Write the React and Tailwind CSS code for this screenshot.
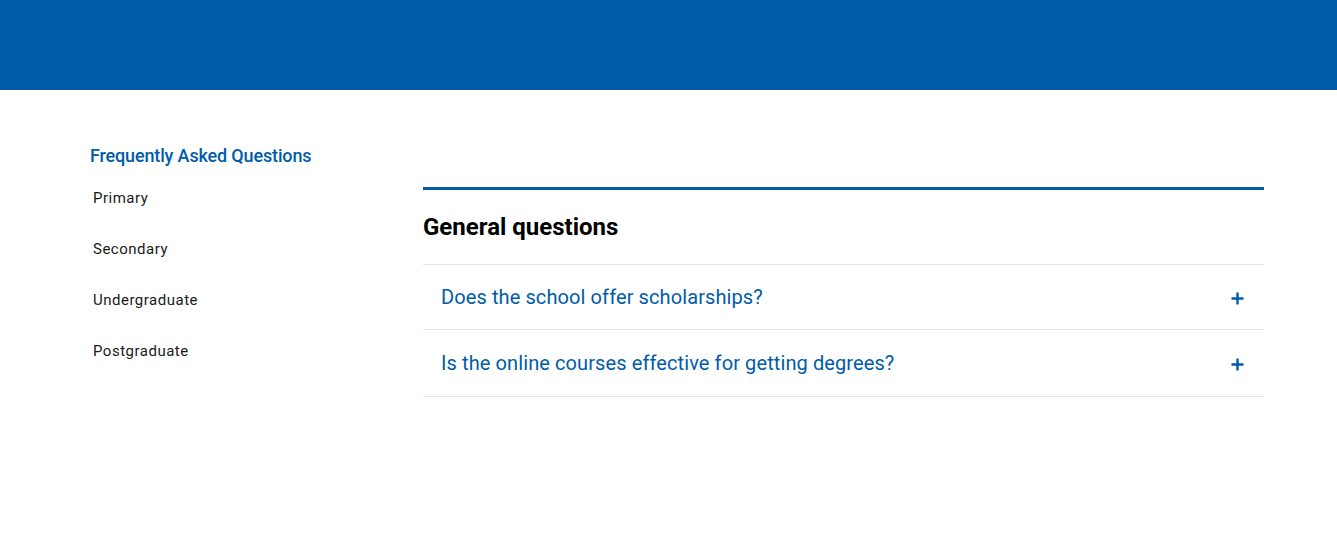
const questions = [
  { text: "Does the school offer scholarships?", h: "h-[65px]" },
  { text: "Is the online courses effective for getting degrees?", h: "h-[67px]" },
];

const levels = ["Primary", "Secondary", "Undergraduate", "Postgraduate"];

const PlusIcon = () => (
  <svg width="13" height="13" viewBox="0 0 13 13" className="text-[#005ca9] mt-[2px]">
    <path d="M6.5 0.5v12M0.5 6.5h12" stroke="currentColor" strokeWidth="2.4" />
  </svg>
);

export default function App() {
  return (
    <div className="min-h-screen bg-white font-['Roboto',sans-serif]">
      <header className="h-[90px] bg-[#005ca9]" />

      <div className="flex pl-[90px] pt-[56px]">
        {/* sidebar */}
        <aside className="w-[333px] shrink-0">
          <h2 className="text-[18px] leading-[20px] font-medium text-[#005ca9] tracking-[-0.15px]">
            Frequently Asked Questions
          </h2>
          <ul className="mt-[7px] pl-[3px]">
            {levels.map((l) => (
              <li key={l} className="h-[51px] flex items-center text-[15px] text-[#1a1a1a] tracking-[0.5px]">
                {l}
              </li>
            ))}
          </ul>
        </aside>

        {/* main */}
        <main className="w-[841px] mt-[41px]">
          <div className="border-t-[3px] border-[#005ca9] pt-[23px] pb-[23px]">
            <h3 className="text-[24px] leading-[28px] font-bold text-black">General questions</h3>
          </div>
          <div className="border-t border-[#e5e5e5]">
            {questions.map((q) => (
              <div
                key={q.text}
                className={`${q.h} flex items-center justify-between pl-[18px] pr-[20px] border-b border-[#e5e5e5]`}
              >
                <span className="text-[20px] text-[#005ca9] tracking-[0.1px]">{q.text}</span>
                <PlusIcon />
              </div>
            ))}
          </div>
        </main>
      </div>
    </div>
  );
}
